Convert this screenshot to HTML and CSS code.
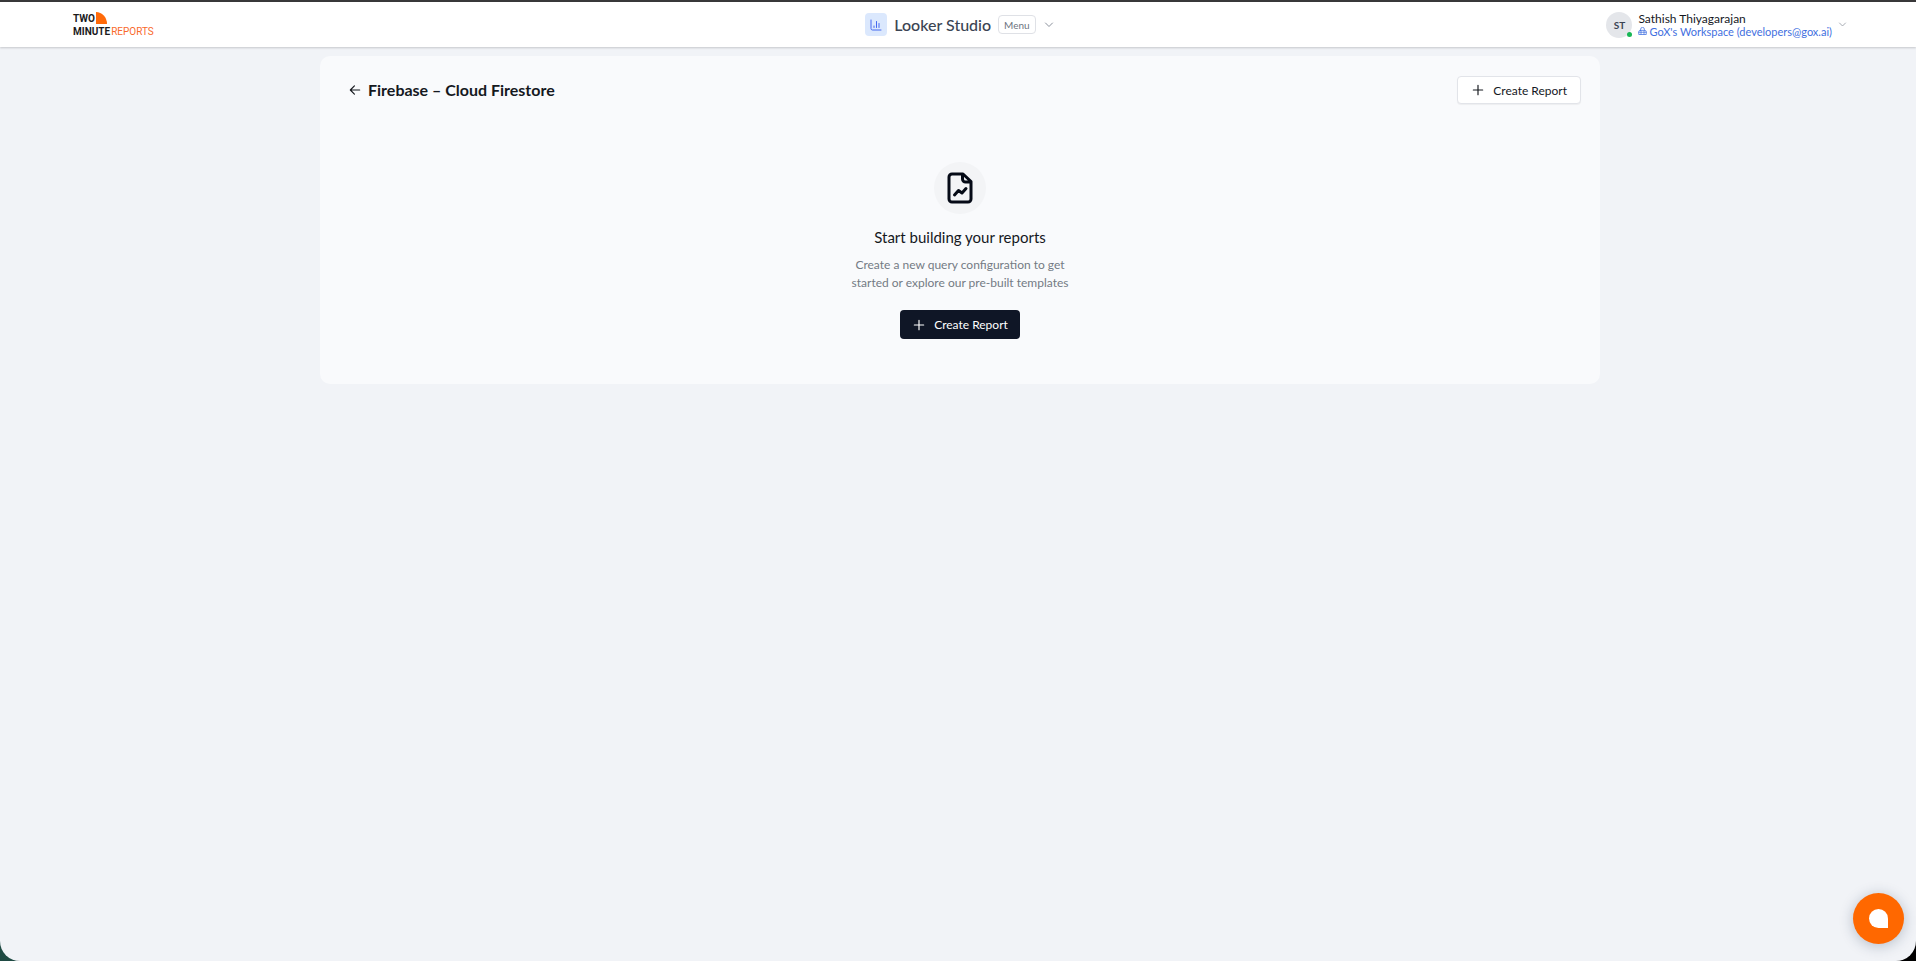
FILE: index.html
```html
<!DOCTYPE html>
<html lang="en">
<head>
<meta charset="utf-8">
<title>Looker Studio – Two Minute Reports</title>
<link rel="stylesheet" href="styles.css">
</head>
<body>
<div class="app">
  <header class="topbar">
    <a class="logo" href="#" aria-label="Two Minute Reports">
      <span class="logo-row">TWO<svg class="logo-mark" viewBox="0 0 11 12" aria-hidden="true"><path d="M0 0A11 12 0 0 1 11 12H0Z"/></svg></span>
      <span class="logo-row">MINUTE<span class="logo-accent">REPORTS</span></span>
    </a>
    <div class="product">
      <span class="product-icon">
        <svg width="12" height="12" viewBox="0 0 24 24" class="stroke" aria-hidden="true"><path d="M2 2v17a3 3 0 0 0 3 3h17M8 17v-3M13 17V5M18 17V9"/></svg>
      </span>
      <h1 class="product-name">Looker Studio</h1>
      <button class="menu" type="button">Menu</button>
      <svg class="stroke chevron" width="12" height="12" viewBox="0 0 24 24" aria-hidden="true"><path d="m5 8 7 7 7-7"/></svg>
    </div>
    <button class="account" type="button">
      <span class="avatar">ST<span class="status"></span></span>
      <span class="who">
        <span class="who-name">Sathish Thiyagarajan</span>
        <span class="workspace">
          <svg class="stroke" width="9" height="9" viewBox="0 0 24 24" aria-hidden="true"><path d="M6 9h12a4 4 0 0 1 4 4v7H2v-7a4 4 0 0 1 4-4ZM7 9V6a5 5 0 0 1 10 0v3M2 14h20M8 11v8M16 11v8"/></svg>
          GoX's Workspace (developers@gox.ai)
        </span>
      </span>
      <svg class="stroke chevron" width="9" height="9" viewBox="0 0 24 24" aria-hidden="true"><path d="m4 8 8 8 8-8"/></svg>
    </button>
  </header>

  <main class="content">
    <div class="card">
      <div class="card-head">
        <a class="back" href="#" aria-label="Back"><svg class="stroke" width="14" height="14" viewBox="0 0 24 24" aria-hidden="true"><path d="M20 12H5M11 5l-7 7 7 7"/></svg></a>
        <h2 class="card-title">Firebase – Cloud Firestore</h2>
        <button class="btn btn-light" type="button"><svg class="stroke" width="14" height="14" viewBox="0 0 24 24" aria-hidden="true"><path d="M4 12h16M12 4v16"/></svg>Create Report</button>
      </div>
      <section class="empty">
        <span class="empty-icon">
          <svg class="stroke" width="26" height="32" viewBox="0 0 26 32" aria-hidden="true"><path d="M16 2H5a3 3 0 0 0-3 3v22a3 3 0 0 0 3 3h16a3 3 0 0 0 3-3V9.500ZM15.500 2.500V7a3 3 0 0 0 3 3H23.500M7.500 23l4-4.500 3.500 2.500 4-4.500"/></svg>
        </span>
        <h3 class="empty-title">Start building your reports</h3>
        <p class="empty-text">Create a new query configuration to get<br>started or explore our pre-built templates</p>
        <button class="btn btn-dark" type="button"><svg class="stroke" width="14" height="14" viewBox="0 0 24 24" aria-hidden="true"><path d="M4 12h16M12 4v16"/></svg>Create Report</button>
      </section>
    </div>
  </main>
</div>
<button class="chat" type="button" aria-label="Open chat"><span class="chat-bubble"></span></button>
</body>
</html>
```
FILE: styles.css
```css
* { box-sizing: border-box; }

html { background: linear-gradient(90deg, #1f4a43 0 50%, #000 50%); }

body {
  margin: 0;
  font-family: Lato, "Liberation Sans", sans-serif;
  font-size: 12px;
  color: #15181e;
}

h1, h2, h3, p { margin: 0; }

button { font: inherit; color: inherit; cursor: pointer; }

.stroke {
  flex: none;
  fill: none;
  stroke: currentColor;
  stroke-width: 2;
  stroke-linecap: round;
  stroke-linejoin: round;
}

.app {
  min-height: 100vh;
  background: #f1f3f7;
  border-top: 2px solid #39383a;
  border-radius: 0 0 20px 20px;
}

.topbar {
  display: grid;
  grid-template-columns: 1fr auto 1fr;
  align-items: center;
  height: 45px;
  padding: 0 69px 0 73px;
  background: #fff;
  box-shadow: 0 1px 2px rgba(0, 0, 0, .18);
}

.logo {
  justify-self: start;
  color: #1b1b1d;
  font: bold 10px/13px Roboto, "Liberation Sans", sans-serif;
  text-decoration: none;
}

.logo-row { display: flex; align-items: center; }
.logo-mark { width: 11px; height: 12px; margin-left: 1px; fill: #ff6a0a; }
.logo-accent { margin-left: 1px; color: #f9692b; font-weight: normal; }

.product { display: flex; align-items: center; gap: 7px; }

.product-icon {
  display: grid;
  place-items: center;
  width: 22px;
  height: 23px;
  border-radius: 4px;
  background: #dbe8fd;
  color: #4468f0;
}

.product-name { font-size: 16px; line-height: 20px; font-weight: 500; color: #3b4453; }

.menu {
  height: 19px;
  padding: 0 5px;
  border: 1px solid #dfe1e6;
  border-radius: 4px;
  background: #fff;
  color: #6d7480;
  font-size: 10px;
}

.chevron { color: #8b919c; }

.account {
  justify-self: end;
  display: flex;
  align-items: center;
  gap: 6px;
  padding: 0;
  border: 0;
  background: none;
  text-align: left;
}

.avatar {
  position: relative;
  display: grid;
  place-items: center;
  width: 26px;
  height: 26px;
  border-radius: 50%;
  background: #e4e6ea;
  color: #3b4453;
  font-size: 10px;
  font-weight: 700;
}

.status {
  position: absolute;
  right: 0;
  bottom: 1px;
  width: 5px;
  height: 5px;
  border-radius: 50%;
  background: #17b755;
}

.who { display: grid; }
.who-name { font-size: 12px; line-height: 13px; }
.workspace { display: flex; align-items: center; gap: 2px; font-size: 11px; line-height: 13px; color: #3f6fe0; }

.content { padding: 9px 0 0 4px; }

.card {
  max-width: 1280px;
  margin: 0 auto;
  padding: 20px 19px 45px;
  border-radius: 10px;
  background: #f9fafc;
}

.card-head { display: flex; align-items: center; gap: 6px; padding-left: 9px; }
.back { display: flex; color: #15181e; }
.card-title { flex: 1; font-size: 16px; line-height: 20px; font-weight: 700; }

.btn {
  display: flex;
  align-items: center;
  gap: 8px;
  border-radius: 4px;
}

.btn-light {
  height: 28px;
  padding: 0 13px;
  border: 1px solid #e2e4e9;
  background: #fff;
  box-shadow: 0 1px 1px rgba(0, 0, 0, .05);
}

.btn-dark { height: 29px; padding: 0 12px; border: 0; background: #0f1626; color: #fff; }

.empty { display: flex; flex-direction: column; align-items: center; padding-top: 58px; }

.empty-icon {
  display: grid;
  place-items: center;
  width: 52px;
  height: 52px;
  border-radius: 50%;
  background: #f3f4f6;
  color: #050a16;
}

.empty-icon .stroke { stroke-width: 3; }

.empty-title { margin-top: 13px; font-size: 15px; line-height: 20px; font-weight: 400; }
.empty-text { margin: 9px 0 18px; font-size: 12px; line-height: 18px; color: #747a84; text-align: center; }

.chat {
  position: fixed;
  right: 12px;
  bottom: 17px;
  display: grid;
  place-items: center;
  width: 51px;
  height: 51px;
  padding: 0;
  border: 0;
  border-radius: 50%;
  background: #ff6800;
  box-shadow: 0 2px 14px rgba(30, 50, 80, .28);
}

.chat-bubble { width: 19px; height: 19px; border-radius: 50% 50% 0 50%; background: #fff; }
```
